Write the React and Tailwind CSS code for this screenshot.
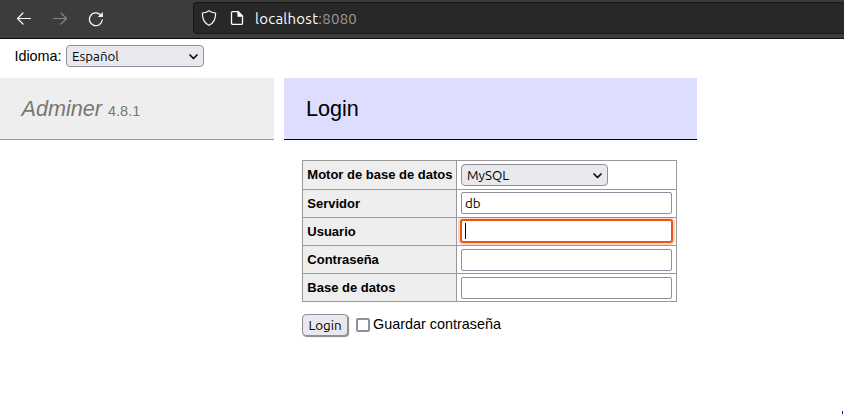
const uiFont = "font-['Ubuntu','Noto_Sans',sans-serif]";

function Chevron({ className }) {
  return (
    <svg className={className} width="9" height="6" viewBox="0 0 9 6" fill="none" stroke="#0c0c0d" strokeWidth="1.7" strokeLinecap="round" strokeLinejoin="round">
      <path d="M1 1l3.5 3.5L8 1" />
    </svg>
  );
}

function Select({ label, className }) {
  return (
    <div className={`${uiFont} flex h-[22px] items-center justify-between rounded-[4px] border border-[#8f8f9d] bg-[#e9e9ed] pl-[5px] pr-[5px] text-[13.33px] leading-5 text-black ${className}`}>
      <span className="pt-0.5">{label}</span>
      <Chevron className="mt-px" />
    </div>
  );
}

function Row({ label, className, children }) {
  return (
    <div className={`flex border-b border-[#999] ${className}`}>
      <div className="flex w-[154px] shrink-0 items-center border-r border-[#999] bg-[#eee] pl-[4.3px] text-[13px] font-bold whitespace-nowrap">
        {label}
      </div>
      <div className="flex grow items-start pl-1">{children}</div>
    </div>
  );
}

function Field({ value, focused }) {
  return (
    <div
      className={`${uiFont} flex h-[22px] w-[211px] items-center rounded-[2px] border bg-white pl-[3px] text-[13.33px] leading-5 ${
        focused
          ? "border-[#e95420] shadow-[0_0_0_1px_#e95420,0_0_0_3px_rgba(233,84,32,0.25)]"
          : "border-[#8f8f9d]"
      }`}
    >
      {focused ? <span className="h-4 w-px bg-black" /> : <span className="pt-0.5">{value}</span>}
    </div>
  );
}

function Toolbar() {
  return (
    <div className="flex h-[39px] items-start border-b border-[#0c0a0c] bg-[#3c3c3c]">
      <div className="flex h-[38px] w-[193px] shrink-0 items-center pl-4">
        <svg width="16" height="16" viewBox="0 0 16 16" fill="none" stroke="#fbfbfe" strokeWidth="1.2" strokeLinecap="round" strokeLinejoin="round">
          <path d="M14.500 7.500H1.500M7 2L1.500 7.500L7 13" />
        </svg>
        <svg className="ml-5" width="16" height="16" viewBox="0 0 16 16" fill="none" stroke="#858585" strokeWidth="1.2" strokeLinecap="round" strokeLinejoin="round">
          <path d="M1.500 7.500H14.500M9 2L14.500 7.500L9 13" />
        </svg>
        <svg className="ml-5" width="16" height="16" viewBox="0 0 16 16" fill="none" stroke="#fbfbfe" strokeWidth="1.3" strokeLinecap="round">
          <path d="M14.200 9A6.400 6.400 0 1 1 12.300 3.700" />
          <path d="M14.800 1v5H9.800z" fill="#fbfbfe" stroke="none" />
        </svg>
      </div>
      <div className="mt-0.5 flex h-8 grow items-center rounded-l-[4px] border border-r-0 border-[#181818] bg-[#282828] pl-[7px]">
        <svg width="16" height="16" viewBox="0 0 16 16" fill="none" stroke="#fbfbfe" strokeWidth="1.2" strokeLinejoin="round">
          <path d="M8 .8C6.300 2.200 3.900 2.800 1.400 3c-.2 5.600 1.600 10 6.600 12.300C13 13 14.800 8.600 14.600 3 12.100 2.800 9.700 2.200 8 .8z" />
        </svg>
        <svg className="ml-3" width="16" height="16" viewBox="0 0 16 16" fill="none" stroke="#fbfbfe" strokeWidth="1.3" strokeLinejoin="round">
          <path d="M9 1.700H3.700a1.200 1.200 0 0 0-1.200 1.200v10.200a1.200 1.200 0 0 0 1.200 1.200h8.600a1.200 1.200 0 0 0 1.200-1.200V6.200z" />
          <path d="M9 1.500v4.700h4.700z" fill="#fbfbfe" />
        </svg>
        <span className={`${uiFont} ml-2.5 mt-px text-[15px] leading-5 tracking-[0.25px] text-[#fbfbfe]`}>
          localhost<span className="text-[#9b9b9b]">:8080</span>
        </span>
      </div>
    </div>
  );
}

export default function App() {
  return (
    <div className="flex h-[414px] w-[844px] flex-col overflow-hidden bg-white font-['Liberation_Sans',Arial,sans-serif] text-[14.4px] text-black">
      <Toolbar />
      <div className="flex h-[39px] items-start pt-1.5 pl-[14.4px]">
        <span className="w-[51.6px] shrink-0 leading-[22px]">Idioma:</span>
        <Select label="Español" className="w-[138px]" />
      </div>
      <div className="flex items-start">
        <h2 className="h-[62px] w-[274px] shrink-0 border-b border-[#999] bg-[#eee] pl-[21.6px] text-[21.6px] leading-[61px] text-[#777]">
          <span className="italic">Adminer</span>
          <span className="ml-1.5 text-[14.47px]">4.8.1</span>
        </h2>
        <main className="ml-2.5 w-[413px]">
          <h1 className="h-[62px] border-b border-black bg-[#ddf] pl-[22px] text-[21.6px] leading-[61px]">Login</h1>
          <div className="mt-5 ml-[18px] w-[375px] border border-b-0 border-[#999]">
            <Row label="Motor de base de datos" className="h-[29px] [&>div:last-child]:pt-[3px]">
              <Select label="MySQL" className="w-[147px]" />
            </Row>
            <Row label="Servidor" className="h-7 [&>div:last-child]:pt-0.5">
              <Field value="db" />
            </Row>
            <Row label="Usuario" className="h-7 [&>div:last-child]:pt-0.5">
              <Field focused />
            </Row>
            <Row label="Contraseña" className="h-7 [&>div:last-child]:pt-[3px]">
              <Field value="" />
            </Row>
            <Row label="Base de datos" className="h-7 [&>div:last-child]:pt-[3px]">
              <Field value="" />
            </Row>
          </div>
          <div className="mt-3 ml-[18px] flex items-start">
            <button className={`${uiFont} flex h-[22px] w-[46px] items-center justify-center rounded-[4px] border border-[#8f8f9d] bg-[#e9e9ed] pt-0.5 text-[13.33px] leading-5 shadow-[1px_1px_1px_#888]`}>
              Login
            </button>
            <span className="mt-1 ml-2 size-[14px] rounded-[2px] border-2 border-[#8f8f9d] bg-white" />
            <span className="ml-[3px] leading-5 whitespace-nowrap">Guardar contraseña</span>
          </div>
        </main>
      </div>
      <div className="mt-auto mr-px h-[3px] w-px self-end bg-[#00f]" />
    </div>
  );
}
